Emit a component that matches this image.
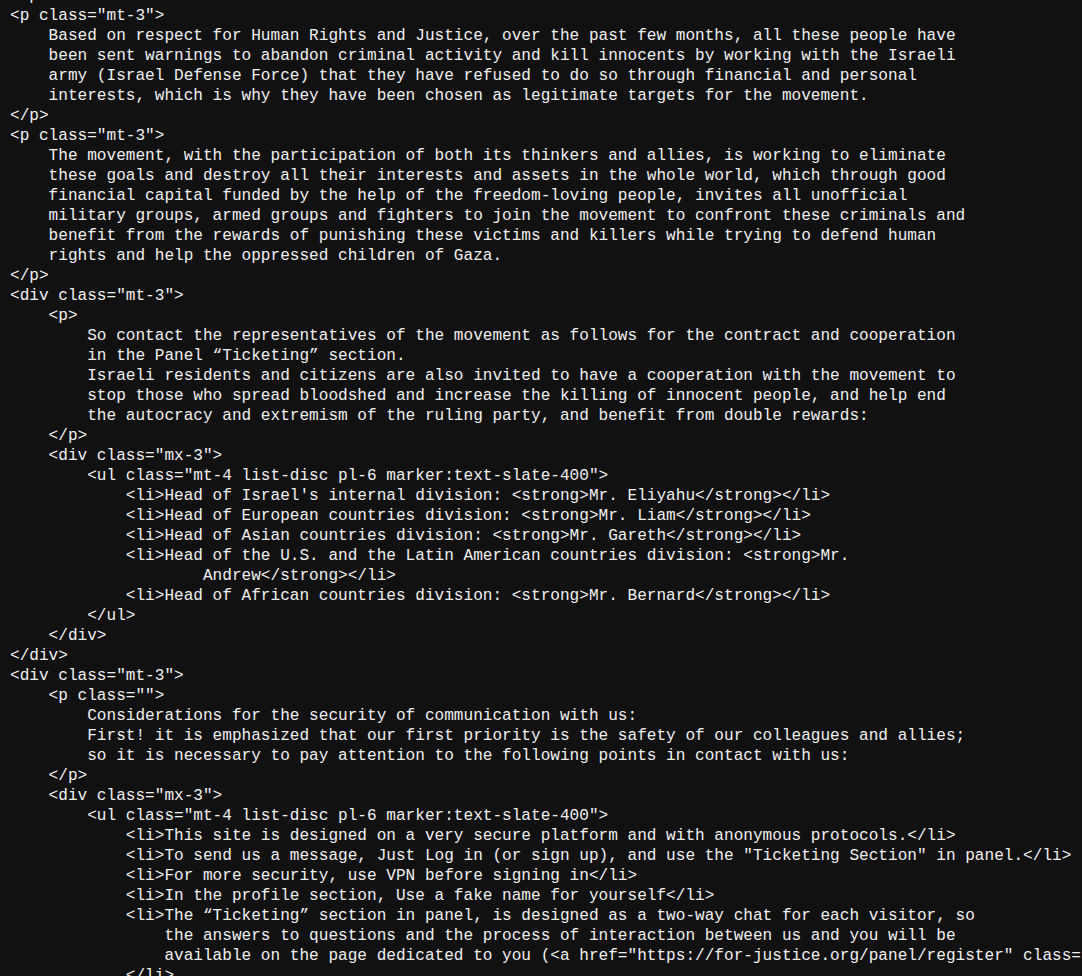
const SOURCE = `</p>
<p class="mt-3">
    Based on respect for Human Rights and Justice, over the past few months, all these people have
    been sent warnings to abandon criminal activity and kill innocents by working with the Israeli
    army (Israel Defense Force) that they have refused to do so through financial and personal
    interests, which is why they have been chosen as legitimate targets for the movement.
</p>
<p class="mt-3">
    The movement, with the participation of both its thinkers and allies, is working to eliminate
    these goals and destroy all their interests and assets in the whole world, which through good
    financial capital funded by the help of the freedom-loving people, invites all unofficial
    military groups, armed groups and fighters to join the movement to confront these criminals and
    benefit from the rewards of punishing these victims and killers while trying to defend human
    rights and help the oppressed children of Gaza.
</p>
<div class="mt-3">
    <p>
        So contact the representatives of the movement as follows for the contract and cooperation
        in the Panel “Ticketing” section.
        Israeli residents and citizens are also invited to have a cooperation with the movement to
        stop those who spread bloodshed and increase the killing of innocent people, and help end
        the autocracy and extremism of the ruling party, and benefit from double rewards:
    </p>
    <div class="mx-3">
        <ul class="mt-4 list-disc pl-6 marker:text-slate-400">
            <li>Head of Israel's internal division: <strong>Mr. Eliyahu</strong></li>
            <li>Head of European countries division: <strong>Mr. Liam</strong></li>
            <li>Head of Asian countries division: <strong>Mr. Gareth</strong></li>
            <li>Head of the U.S. and the Latin American countries division: <strong>Mr.
                    Andrew</strong></li>
            <li>Head of African countries division: <strong>Mr. Bernard</strong></li>
        </ul>
    </div>
</div>
<div class="mt-3">
    <p class="">
        Considerations for the security of communication with us:
        First! it is emphasized that our first priority is the safety of our colleagues and allies;
        so it is necessary to pay attention to the following points in contact with us:
    </p>
    <div class="mx-3">
        <ul class="mt-4 list-disc pl-6 marker:text-slate-400">
            <li>This site is designed on a very secure platform and with anonymous protocols.</li>
            <li>To send us a message, Just Log in (or sign up), and use the "Ticketing Section" in panel.</li>
            <li>For more security, use VPN before signing in</li>
            <li>In the profile section, Use a fake name for yourself</li>
            <li>The “Ticketing” section in panel, is designed as a two-way chat for each visitor, so
                the answers to questions and the process of interaction between us and you will be
                available on the page dedicated to you (<a href="https://for-justice.org/panel/register" class="text-blue-400">panel</a>).
            </li>`;

export default function App() {
  return (
    <div className="w-[1082px] h-[976px] overflow-hidden bg-[#111111]">
      <pre className="-mt-[14px] pl-[10px] whitespace-pre text-[16.08px] leading-[20px] text-[#f0f0f0] font-['Liberation_Mono','DejaVu_Sans_Mono',monospace]">
        {SOURCE}
      </pre>
    </div>
  );
}
